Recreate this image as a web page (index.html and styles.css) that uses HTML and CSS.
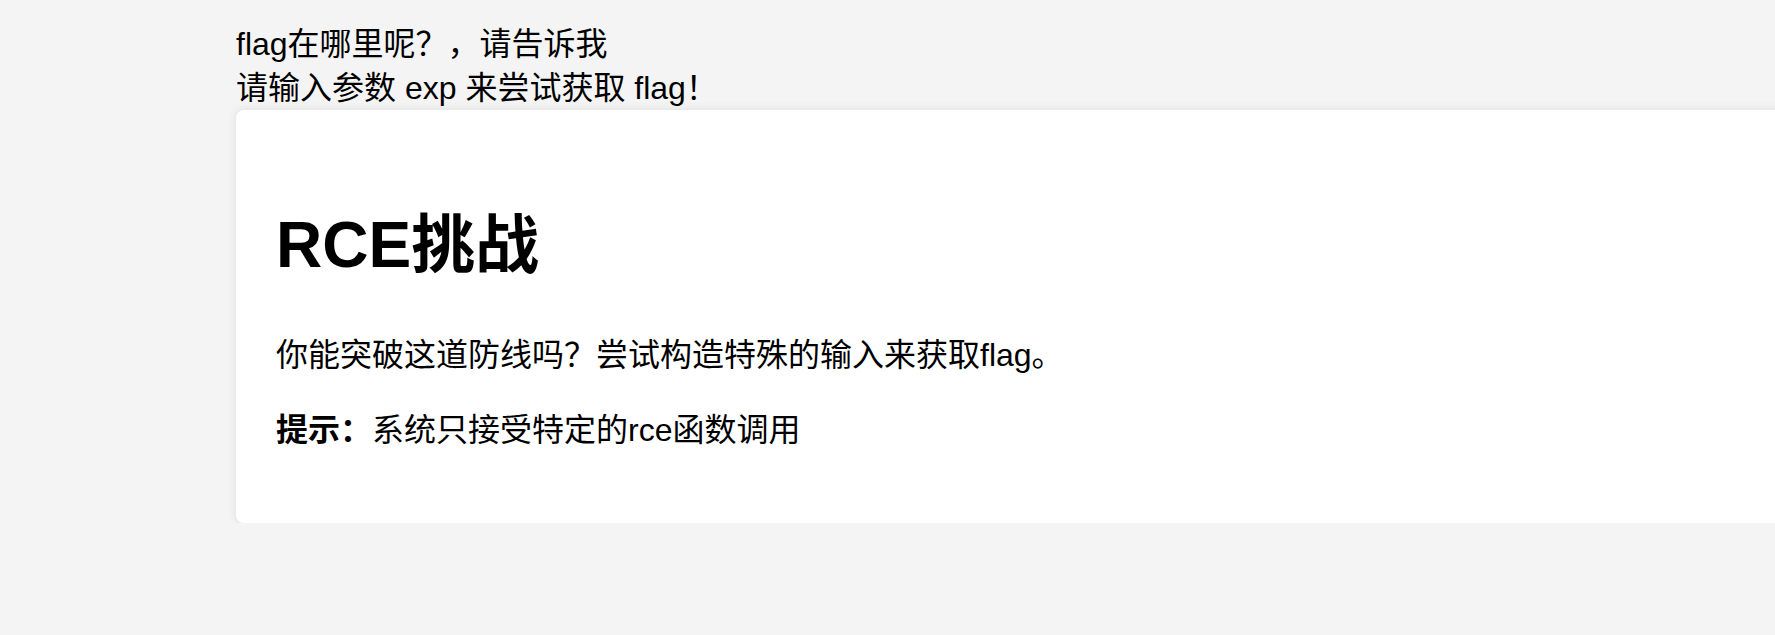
FILE: index.html
```html
<!DOCTYPE html>
<html lang="zh-CN">
<head>
    <meta charset="UTF-8">
    <meta name="viewport" content="width=device-width, initial-scale=1.0">
    <title>RCE挑战</title>
    <link rel="stylesheet" href="styles.css">
</head>
<body>
    <div class="page">
        <div class="intro">
            flag在哪里呢？，请告诉我<br>
            请输入参数 exp 来尝试获取 flag！
        </div>
        <div class="container">
            <h1>RCE挑战</h1>
            <p>你能突破这道防线吗？尝试构造特殊的输入来获取flag。</p>
            <p><strong>提示：</strong>系统只接受特定的rce函数调用</p>
        </div>
    </div>
</body>
</html>
```

FILE: styles.css
```css
html, body {
    overflow: hidden;
}

body {
    font-family: "Liberation Sans", Arial, "Noto Sans CJK SC", sans-serif;
    background: #f4f4f4;
    color: #000;
    margin: 0;
}

.page {
    padding: 22px 0 0 236px;
}

.intro {
    font-size: 32px;
    line-height: 44px;
}

.container {
    background: #ffffff;
    width: calc(100% + 100px);
    box-sizing: border-box;
    padding: 40px;
    border-radius: 8px;
    box-shadow: 0 0 10px rgba(0, 0, 0, 0.1);
}

h1 {
    font-size: 64px;
    line-height: 70px;
    margin: 60px 0 55px;
}

p {
    font-size: 32px;
    line-height: 40px;
    margin: 0 0 35px;
}

p:last-child {
    margin-bottom: 33px;
}
```
